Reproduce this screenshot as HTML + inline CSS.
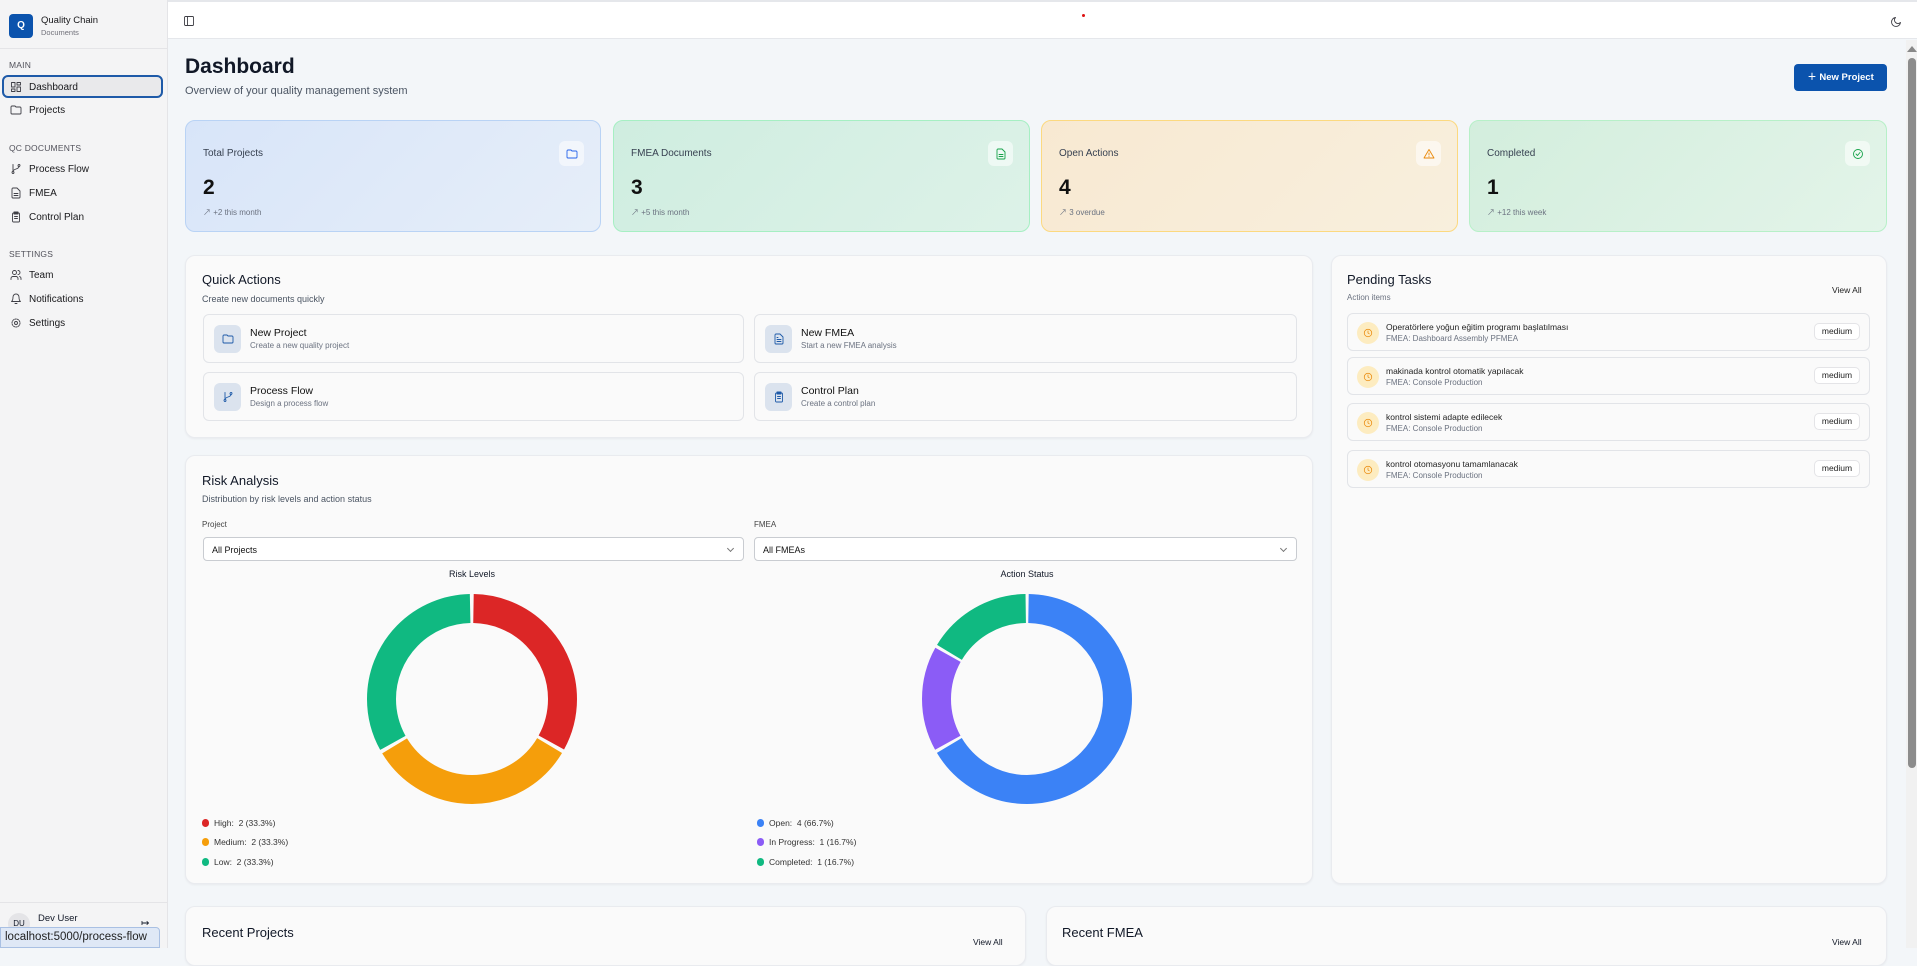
<!DOCTYPE html>
<html><head><meta charset="utf-8"><style>
*{box-sizing:border-box;margin:0;padding:0}
body{width:1917px;height:948px;overflow:hidden;font-family:"Liberation Sans","Noto Sans CJK JP",sans-serif;background:#f3f6f9;color:#111827;position:relative}
.a{position:absolute}
.sb{left:0;top:0;width:168px;height:948px;background:#f4f4f5;border-right:1px solid #e4e4e7}
.nav{position:absolute;left:10px;font-size:10px;color:#18181b;display:flex;align-items:center;gap:7px}
.sec{position:absolute;left:9px;font-size:8.5px;color:#52525b;letter-spacing:.2px}
.ic{width:12px;height:12px;fill:none;stroke:#3f3f46;stroke-width:1.8;stroke-linecap:round;stroke-linejoin:round}
.card{position:absolute;background:#fafafa;border:1px solid #e9ebef;border-radius:10px;box-shadow:0 1px 2px rgba(0,0,0,.05)}
.stat{position:absolute;top:120px;height:112px;border-radius:10px;border:1px solid}
.stat .l{position:absolute;left:17px;top:27px;font-size:10px;color:#374151}
.stat .n{position:absolute;left:17px;top:55px;font-size:21px;font-weight:bold;color:#111}
.stat .s{position:absolute;left:17px;top:86px;font-size:8px;color:#6b7280}
.stat .ib{position:absolute;right:16px;top:20px;width:25px;height:25px;border-radius:6px;background:rgba(255,255,255,.55);display:flex;align-items:center;justify-content:center}
.qa{position:absolute;height:49px;border:1px solid #e2e4e8;border-radius:6px;background:#fafafa}
.qa .qi{position:absolute;left:10px;top:10px;width:27px;height:28px;border-radius:6px;background:#dbe3ee;display:flex;align-items:center;justify-content:center}
.qa .t{position:absolute;left:46px;top:12px;font-size:10.5px;color:#111}
.qa .d{position:absolute;left:46px;top:26px;font-size:8px;color:#6b7280}
.task{position:absolute;left:1347px;width:523px;height:38px;border:1px solid #e2e4e8;border-radius:6px;background:#fafafa}
.task .c{position:absolute;left:9px;top:8px;width:22px;height:22px;border-radius:50%;background:#fdecc0;display:flex;align-items:center;justify-content:center}
.task .t{position:absolute;left:38px;top:8px;font-size:8.5px;color:#222}
.task .f{position:absolute;left:38px;top:20px;font-size:8px;color:#6b7280}
.task .b{position:absolute;right:9px;top:9px;width:46px;height:17px;border:1px solid #e4e4e7;border-radius:5px;background:#fff;font-size:8.5px;text-align:center;line-height:15px;color:#222}
.sel{position:absolute;top:537px;height:24px;border:1px solid #c9ccd1;border-radius:4px;background:#fff;font-size:9px;padding:7px 8px;color:#111}
.sel:after{content:"";position:absolute;right:10px;top:8px;width:4px;height:4px;border-right:1px solid #777;border-bottom:1px solid #777;transform:rotate(45deg)}
.lg{position:absolute;font-size:8.5px;color:#333;display:flex;align-items:center;gap:5px}
.lg i{display:inline-block;width:7px;height:8px;border-radius:4px}
</style></head><body>
<div class="a sb">
 <div class="a" style="left:9px;top:14px;width:24px;height:24px;border-radius:4px;background:#0b53ad;color:#fff;font-size:10px;font-weight:bold;text-align:center;line-height:24px">Q</div>
 <div class="a" style="left:41px;top:15px;font-size:9.5px;color:#18181b">Quality Chain</div>
 <div class="a" style="left:41px;top:28px;font-size:7.5px;color:#71717a">Documents</div>
 <div class="a" style="left:0;top:48px;width:168px;border-top:1px solid #e4e4e7"></div>
 <div class="sec" style="top:60px">MAIN</div>
 <div class="a" style="left:2px;top:75px;width:161px;height:23px;border:2px solid #1e5aa8;border-radius:6px;background:#e9e9eb"></div>
 <div class="nav" style="top:81px"><svg class="ic" viewBox="0 0 24 24"><rect x="3" y="3" width="7" height="9"/><rect x="14" y="3" width="7" height="5"/><rect x="14" y="12" width="7" height="9"/><rect x="3" y="16" width="7" height="5"/></svg>Dashboard</div>
 <div class="nav" style="top:104px"><svg class="ic" viewBox="0 0 24 24"><path d="M4 20h16a2 2 0 0 0 2-2V8a2 2 0 0 0-2-2h-8L10 4H4a2 2 0 0 0-2 2v12a2 2 0 0 0 2 2z"/></svg>Projects</div>
 <div class="sec" style="top:143px">QC DOCUMENTS</div>
 <div class="nav" style="top:163px"><svg class="ic" viewBox="0 0 24 24"><circle cx="6" cy="19" r="2"/><circle cx="18" cy="5" r="2"/><path d="M6 3v14M18 7c0 6-12 4-12 10"/></svg>Process Flow</div>
 <div class="nav" style="top:187px"><svg class="ic" viewBox="0 0 24 24"><path d="M14 2H6a2 2 0 0 0-2 2v16a2 2 0 0 0 2 2h12a2 2 0 0 0 2-2V8z"/><path d="M8 13h8M8 17h8"/></svg>FMEA</div>
 <div class="nav" style="top:211px"><svg class="ic" viewBox="0 0 24 24"><rect x="5" y="4" width="14" height="18" rx="2"/><rect x="8" y="2" width="8" height="4"/><path d="M9 11h6M9 15h6"/></svg>Control Plan</div>
 <div class="sec" style="top:249px">SETTINGS</div>
 <div class="nav" style="top:269px"><svg class="ic" viewBox="0 0 24 24"><circle cx="9" cy="7" r="4"/><path d="M2 21v-2a4 4 0 0 1 4-4h6a4 4 0 0 1 4 4v2M16 3a4 4 0 0 1 0 8M22 21v-2a4 4 0 0 0-3-4"/></svg>Team</div>
 <div class="nav" style="top:293px"><svg class="ic" viewBox="0 0 24 24"><path d="M6 8a6 6 0 0 1 12 0c0 7 3 9 3 9H3s3-2 3-9M10 21h4"/></svg>Notifications</div>
 <div class="nav" style="top:317px"><svg class="ic" viewBox="0 0 24 24"><circle cx="12" cy="12" r="3"/><circle cx="12" cy="12" r="8" stroke-dasharray="3 2"/></svg>Settings</div>
 <div class="a" style="left:0;top:902px;width:168px;border-top:1px solid #e4e4e7"></div>
 <div class="a" style="left:8px;top:913px;width:22px;height:22px;border-radius:50%;background:#e4e4e7;font-size:8px;text-align:center;line-height:22px">DU</div>
 <div class="a" style="left:38px;top:913px;font-size:9.5px">Dev User</div>
 <div class="a" style="left:141px;top:918px;font-size:10px">↦</div>
</div>
<div class="a" style="left:0;top:927px;width:160px;height:21px;background:#dfe8f6;border:1px solid #a9c0e3;border-radius:0 4px 0 0;font-size:11.5px;color:#222;padding:3px 4px">localhost:5000/process-flow</div>
<div class="a" style="left:168px;top:0;width:1749px;height:39px;background:#fff;border-bottom:1px solid #e5e7eb;border-top:2px solid #e5e7eb"></div>
<svg class="a ic" style="left:183px;top:15px" viewBox="0 0 24 24"><rect x="3" y="3" width="18" height="18" rx="2"/><path d="M9 3v18"/></svg>
<div class="a" style="left:1082px;top:14px;width:3px;height:3px;border-radius:50%;background:#d11"></div>
<svg class="a ic" style="left:1890px;top:16px" viewBox="0 0 24 24"><path d="M21 13A9 9 0 1 1 11 3a7 7 0 0 0 10 10z"/></svg>
<div class="a" style="left:1906px;top:40px;width:11px;height:908px;background:#f1f1f1"></div>
<div class="a" style="left:1908px;top:58px;width:8px;height:710px;background:#8c8c8c;border-radius:4px"></div>
<div class="a" style="left:1907px;top:46px;width:0;height:0;border-left:5px solid transparent;border-right:5px solid transparent;border-bottom:6px solid #888"></div>
<div class="a" style="left:185px;top:55px;font-size:21px;font-weight:bold">Dashboard</div>
<div class="a" style="left:185px;top:85px;font-size:11px;color:#4b5563">Overview of your quality management system</div>
<div class="a" style="left:1794px;top:64px;width:93px;height:27px;background:#0b53ad;border-radius:4px;color:#fff;font-size:9.5px;font-weight:bold;text-align:center;line-height:27px">＋ New Project</div>
<div class="stat" style="left:185px;width:416px;background:linear-gradient(135deg,#d8e5f9,#e6eef9);border-color:#b9d3f5"><div class="l">Total Projects</div><div class="n">2</div><div class="s">↗ +2 this month</div><div class="ib"><svg class="ic" style="stroke:#2563eb" viewBox="0 0 24 24"><path d="M4 20h16a2 2 0 0 0 2-2V8a2 2 0 0 0-2-2h-8L10 4H4a2 2 0 0 0-2 2v12a2 2 0 0 0 2 2z"/></svg></div></div>
<div class="stat" style="left:613px;width:417px;background:linear-gradient(135deg,#cfede0,#ddf2e8);border-color:#a6efc3"><div class="l">FMEA Documents</div><div class="n">3</div><div class="s">↗ +5 this month</div><div class="ib"><svg class="ic" style="stroke:#16a34a" viewBox="0 0 24 24"><path d="M14 2H6a2 2 0 0 0-2 2v16a2 2 0 0 0 2 2h12a2 2 0 0 0 2-2V8z"/><path d="M8 13h8M8 17h8"/></svg></div></div>
<div class="stat" style="left:1041px;width:417px;background:linear-gradient(135deg,#f8e9d2,#f8efdd);border-color:#fcd980"><div class="l">Open Actions</div><div class="n">4</div><div class="s">↗ 3 overdue</div><div class="ib"><svg class="ic" style="stroke:#ea8a0c" viewBox="0 0 24 24"><path d="M12 3L2 20h20z"/><path d="M12 10v4M12 17v.5"/></svg></div></div>
<div class="stat" style="left:1469px;width:418px;background:linear-gradient(135deg,#d3eedd,#e3f4e9);border-color:#b7f0c8"><div class="l">Completed</div><div class="n">1</div><div class="s">↗ +12 this week</div><div class="ib"><svg class="ic" style="stroke:#16a34a" viewBox="0 0 24 24"><circle cx="12" cy="12" r="9"/><path d="M8 12l3 3 5-6"/></svg></div></div>
<div class="card" style="left:185px;top:255px;width:1128px;height:183px"></div>
<div class="a" style="left:202px;top:272px;font-size:13px">Quick Actions</div>
<div class="a" style="left:202px;top:294px;font-size:9px;color:#4b5563">Create new documents quickly</div>
<div class="qa" style="left:203px;top:314px;width:541px"><div class="qi"><svg class="ic" style="stroke:#1e5aa8" viewBox="0 0 24 24"><path d="M4 20h16a2 2 0 0 0 2-2V8a2 2 0 0 0-2-2h-8L10 4H4a2 2 0 0 0-2 2v12a2 2 0 0 0 2 2z"/></svg></div><div class="t">New Project</div><div class="d">Create a new quality project</div></div>
<div class="qa" style="left:754px;top:314px;width:543px"><div class="qi"><svg class="ic" style="stroke:#1e5aa8" viewBox="0 0 24 24"><path d="M14 2H6a2 2 0 0 0-2 2v16a2 2 0 0 0 2 2h12a2 2 0 0 0 2-2V8z"/><path d="M8 13h8M8 17h8M8 9h2"/></svg></div><div class="t">New FMEA</div><div class="d">Start a new FMEA analysis</div></div>
<div class="qa" style="left:203px;top:372px;width:541px"><div class="qi"><svg class="ic" style="stroke:#1e5aa8" viewBox="0 0 24 24"><circle cx="6" cy="19" r="2"/><circle cx="18" cy="5" r="2"/><path d="M6 3v14M18 7c0 6-12 4-12 10"/></svg></div><div class="t">Process Flow</div><div class="d">Design a process flow</div></div>
<div class="qa" style="left:754px;top:372px;width:543px"><div class="qi"><svg class="ic" style="stroke:#1e5aa8" viewBox="0 0 24 24"><rect x="5" y="4" width="14" height="18" rx="2"/><rect x="8" y="2" width="8" height="4"/><path d="M9 11h6M9 15h6"/></svg></div><div class="t">Control Plan</div><div class="d">Create a control plan</div></div>
<div class="card" style="left:1331px;top:255px;width:556px;height:629px"></div>
<div class="a" style="left:1347px;top:272px;font-size:13px">Pending Tasks</div>
<div class="a" style="left:1347px;top:293px;font-size:8px;color:#6b7280">Action items</div>
<div class="a" style="left:1832px;top:285px;font-size:8.5px;color:#222">View All</div>
<div class="task" style="top:313px"><div class="c"><svg class="ic" style="stroke:#ea8a0c;width:10px" viewBox="0 0 24 24"><circle cx="12" cy="12" r="9"/><path d="M12 7v5l3 2"/></svg></div><div class="t">Operatörlere yoğun eğitim programı başlatılması</div><div class="f">FMEA: Dashboard Assembly PFMEA</div><div class="b">medium</div></div>
<div class="task" style="top:357px"><div class="c"><svg class="ic" style="stroke:#ea8a0c;width:10px" viewBox="0 0 24 24"><circle cx="12" cy="12" r="9"/><path d="M12 7v5l3 2"/></svg></div><div class="t">makinada kontrol otomatik yapılacak</div><div class="f">FMEA: Console Production</div><div class="b">medium</div></div>
<div class="task" style="top:403px"><div class="c"><svg class="ic" style="stroke:#ea8a0c;width:10px" viewBox="0 0 24 24"><circle cx="12" cy="12" r="9"/><path d="M12 7v5l3 2"/></svg></div><div class="t">kontrol sistemi adapte edilecek</div><div class="f">FMEA: Console Production</div><div class="b">medium</div></div>
<div class="task" style="top:450px"><div class="c"><svg class="ic" style="stroke:#ea8a0c;width:10px" viewBox="0 0 24 24"><circle cx="12" cy="12" r="9"/><path d="M12 7v5l3 2"/></svg></div><div class="t">kontrol otomasyonu tamamlanacak</div><div class="f">FMEA: Console Production</div><div class="b">medium</div></div>
<div class="card" style="left:185px;top:455px;width:1128px;height:429px"></div>
<div class="a" style="left:202px;top:473px;font-size:13px">Risk Analysis</div>
<div class="a" style="left:202px;top:494px;font-size:9px;color:#4b5563">Distribution by risk levels and action status</div>
<div class="a" style="left:202px;top:520px;font-size:8px;color:#444">Project</div>
<div class="a" style="left:754px;top:520px;font-size:8px;color:#444">FMEA</div>
<div class="sel" style="left:203px;width:541px">All Projects</div>
<div class="sel" style="left:754px;width:543px">All FMEAs</div>
<div class="a" style="left:412px;top:569px;width:120px;text-align:center;font-size:9px">Risk Levels</div>
<div class="a" style="left:967px;top:569px;width:120px;text-align:center;font-size:9px">Action Status</div>
<svg class="a" style="left:367px;top:594px" width="210" height="210" viewBox="0 0 210 210"><g transform="rotate(-90 105 105)" fill="none" stroke-width="29">
<circle cx="105" cy="105" r="90.5" stroke="#dc2626" stroke-dasharray="186 382.6" stroke-dashoffset="-1.5"/>
<circle cx="105" cy="105" r="90.5" stroke="#f59e0b" stroke-dasharray="186 382.6" stroke-dashoffset="-191"/>
<circle cx="105" cy="105" r="90.5" stroke="#10b981" stroke-dasharray="186 382.6" stroke-dashoffset="-380.5"/></g></svg>
<svg class="a" style="left:922px;top:594px" width="210" height="210" viewBox="0 0 210 210"><g transform="rotate(-90 105 105)" fill="none" stroke-width="29">
<circle cx="105" cy="105" r="90.5" stroke="#3b82f6" stroke-dasharray="376 192.6" stroke-dashoffset="-1.5"/>
<circle cx="105" cy="105" r="90.5" stroke="#8b5cf6" stroke-dasharray="91.8 476.8" stroke-dashoffset="-380.6"/>
<circle cx="105" cy="105" r="90.5" stroke="#10b981" stroke-dasharray="91.8 476.8" stroke-dashoffset="-475.3"/></g></svg>
<div class="lg" style="left:202px;top:818px"><i style="background:#dc2626"></i>High:&nbsp; 2 (33.3%)</div>
<div class="lg" style="left:202px;top:837px"><i style="background:#f59e0b"></i>Medium:&nbsp; 2 (33.3%)</div>
<div class="lg" style="left:202px;top:857px"><i style="background:#10b981"></i>Low:&nbsp; 2 (33.3%)</div>
<div class="lg" style="left:757px;top:818px"><i style="background:#3b82f6"></i>Open:&nbsp; 4 (66.7%)</div>
<div class="lg" style="left:757px;top:837px"><i style="background:#8b5cf6"></i>In Progress:&nbsp; 1 (16.7%)</div>
<div class="lg" style="left:757px;top:857px"><i style="background:#10b981"></i>Completed:&nbsp; 1 (16.7%)</div>
<div class="card" style="left:185px;top:906px;width:841px;height:60px"></div>
<div class="card" style="left:1046px;top:906px;width:841px;height:60px"></div>
<div class="a" style="left:202px;top:925px;font-size:13px">Recent Projects</div>
<div class="a" style="left:1062px;top:925px;font-size:13px">Recent FMEA</div>
<div class="a" style="left:973px;top:937px;font-size:8.5px">View All</div>
<div class="a" style="left:1832px;top:937px;font-size:8.5px">View All</div>
</body></html>
